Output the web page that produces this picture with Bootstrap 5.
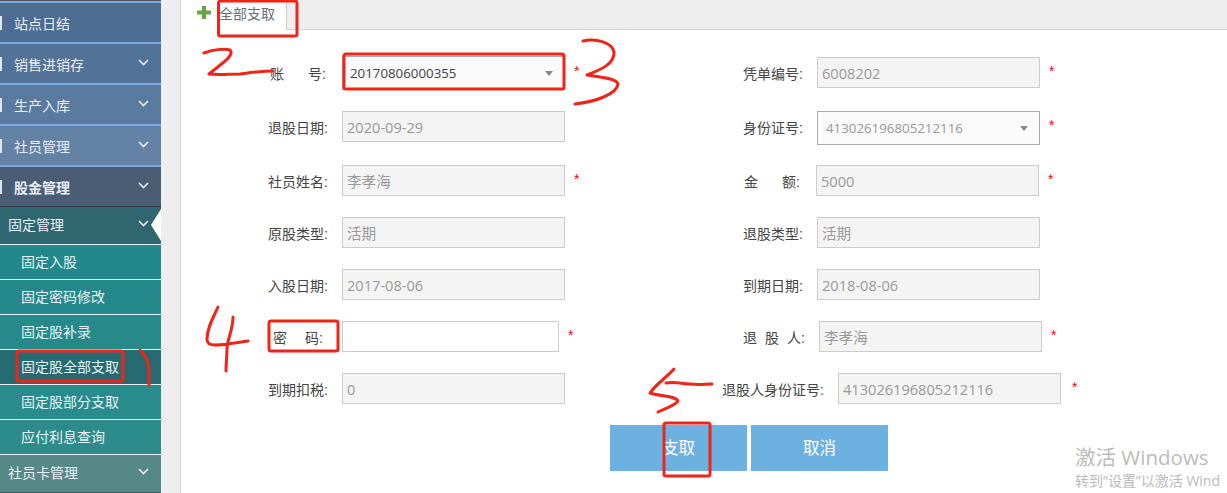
<!DOCTYPE html>
<html lang="zh"><head><meta charset="utf-8">
<link href="https://cdn.jsdelivr.net/npm/bootstrap@5.3.0/dist/css/bootstrap.min.css" rel="stylesheet">
<style>
html,body{height:493px;overflow:hidden;background:#fff;}
body{font-family:"Liberation Sans","Noto Sans CJK SC",sans-serif;font-size:14px;color:#444;position:relative;}
.shell{height:493px;}
.side{width:161px;flex:none;overflow:hidden;background:#556;}
.side-list{list-style:none;margin:0;padding:0;}
.m-item{height:41px;display:flex;align-items:center;justify-content:space-between;padding:3px 12px 0 14px;color:#e9eef3;border-top:2px solid #7ba8de;position:relative;}
.m-item::before{content:"";position:absolute;left:0;top:13px;width:2px;height:14px;background:#dfe6ee;}
.m1{height:41px;margin-top:1px;background:#4c6c94;}
.m2{background:#527297;}.m3{background:#5a7a9f;}.m4{background:#6482a6;}
.m5{background:#4a5d75;font-weight:700;}
.m6{height:38px;background:#2f6670;padding:0 12px 0 8px;border-top:1px solid #3c3c40;}
.m6::before{display:none;}
.m6::after{content:"";position:absolute;right:0;top:2px;border-style:solid;border-width:16px 10px 16px 0;border-color:transparent #fff transparent transparent;}
.s-item{height:35px;display:flex;align-items:center;padding-left:21px;color:#e9f2f2;border-top:1px solid #e8f0f0;background:#23888c;}
.s2{background:#25898c;}.s3{background:#28898b;}.s5{background:#2a8b8c;}.s6{background:#2c8c8c;}
.s4{background:#276a72;}
.m7{height:38px;background:#568888;padding:0 12px 0 8px;border-top:1px solid #e8f0f0;}
.m7::before{display:none;}
.chev{flex:none;margin-top:-5px;}
.gutter{width:20px;flex:none;background:#eee;border-right:1px solid #cfd3d8;}
.pane{flex:1;min-width:0;}
.tabstrip{height:30px;background:#eee;border-bottom:1px solid #cbd5e1;}
.tab1{width:106px;height:30px;background:#fff;border-right:1px solid #ccc;padding:4px 0 0 16px;gap:8px;color:#666e78;}
.plus-mk{margin-top:2px;flex:none;}
.formarea{padding-top:27px;position:relative;}
.frow{height:54px;}.frow.shrt{height:52px;}
.fcell{position:relative;align-items:flex-start;height:33px;}
.cl{width:562px;padding-left:87px;}
.lb{width:74px;flex:none;line-height:35px;color:#444;white-space:nowrap;padding-left:0;}
.ind2{padding-left:2px;}.ind5{padding-left:5px;}
.lb-j{width:73px;padding-left:1px;}
.lb-t{width:76px;}
.lb-x{width:116px;margin-left:-21px;}
.sp{display:inline-block;}
.sp1{width:24px;}.sp2{width:18px;}.sp3{width:8px;}
.fld{width:223px;height:31px;border:1px solid #ccc;background:#f4f4f4;color:#999;line-height:31px;padding-left:4px;flex:none;font-family:"Open Sans","Noto Sans CJK SC",sans-serif;font-size:14.6px;}
.fld.w{background:#fff;width:217px;}
.fld.sel{background:#fafafa;border-color:#aaa;height:34px;line-height:32px;padding:0 10px 0 7px;color:#444;display:flex;justify-content:space-between;align-items:center;font-size:13.3px;}
.sel-up{margin-top:-1px;}
.fld.sel.g{color:#999;padding-left:8px;padding-right:10px;}
.caret-mk{border-style:solid;border-width:5px 4px 0;border-color:#888 transparent transparent;margin-right:1px;}
.star{color:#f00;font-size:14px;margin-left:9px;line-height:29px;}
.star-x{margin-left:11px;}
.btns{gap:4px;margin-left:428px;padding-left:1px;}
.actbtn{width:137px;height:46px;background:#6db1e0;color:#fff;border:0;border-radius:0;font-size:16.5px;padding:0;}
.actbtn:hover{background:#6db1e0;color:#fff;}
.wm{position:absolute;left:1075px;top:447px;color:#bbb;line-height:1;white-space:nowrap;pointer-events:none;}
.wm1{font-size:20.5px;font-family:"Open Sans","Noto Sans CJK SC",sans-serif;}
.wm2{font-size:14px;margin-top:6px;font-family:"Open Sans","Noto Sans CJK SC",sans-serif;}
.ink{position:absolute;left:0;top:0;pointer-events:none;}
.ink *{fill:none;stroke:#f2241a;stroke-width:3;stroke-linecap:round;stroke-linejoin:round;}
</style></head><body>
<div class="d-flex shell">
  <nav class="side">
    <ul class="side-list">
      <li class="m-item m1">站点日结</li>
      <li class="m-item m2">销售进销存<svg class="chev" width="11" height="7" viewBox="0 0 11 7"><path d="M1 1l4.500 4.500L10 1" fill="none" stroke="#e9eef3" stroke-width="1.6"/></svg></li>
      <li class="m-item m3">生产入库<svg class="chev" width="11" height="7" viewBox="0 0 11 7"><path d="M1 1l4.500 4.500L10 1" fill="none" stroke="#e9eef3" stroke-width="1.6"/></svg></li>
      <li class="m-item m4">社员管理<svg class="chev" width="11" height="7" viewBox="0 0 11 7"><path d="M1 1l4.500 4.500L10 1" fill="none" stroke="#e9eef3" stroke-width="1.6"/></svg></li>
      <li class="m-item m5">股金管理<svg class="chev" width="11" height="7" viewBox="0 0 11 7"><path d="M1 1l4.500 4.500L10 1" fill="none" stroke="#e9eef3" stroke-width="1.6"/></svg></li>
      <li class="m-item m6">固定管理<svg class="chev" width="11" height="7" viewBox="0 0 11 7"><path d="M1 1l4.500 4.500L10 1" fill="none" stroke="#e9eef3" stroke-width="1.6"/></svg></li>
      <li class="s-item s1">固定入股</li>
      <li class="s-item s2">固定密码修改</li>
      <li class="s-item s3">固定股补录</li>
      <li class="s-item s4">固定股全部支取</li>
      <li class="s-item s5">固定股部分支取</li>
      <li class="s-item s6">应付利息查询</li>
      <li class="m-item m7">社员卡管理<svg class="chev" width="11" height="7" viewBox="0 0 11 7"><path d="M1 1l4.500 4.500L10 1" fill="none" stroke="#e9eef3" stroke-width="1.6"/></svg></li>
    </ul>
  </nav>
  <div class="gutter"></div>
  <main class="pane">
    <div class="tabstrip"><div class="tab1 d-flex align-items-start">
      <svg class="plus-mk" width="14" height="13" viewBox="0 0 14 13"><path d="M5 0h4v4.500h5v4H9V13H5V8.500H0v-4h5z" fill="#62a744"/></svg><span>全部支取</span>
    </div></div>
    <div class="formarea">
      <div class="frow d-flex"><div class="cl d-flex fcell"><span class="lb ind2">账<span class="sp sp1"></span>号:</span><div class="fld sel sel-up"><span>20170806000355</span><i class="caret-mk"></i></div><span class="star">*</span></div>
        <div class="d-flex fcell"><span class="lb">凭单编号:</span><div class="fld">6008202</div><span class="star">*</span></div></div>
      <div class="frow d-flex"><div class="cl d-flex fcell"><span class="lb">退股日期:</span><div class="fld">2020-09-29</div></div>
        <div class="d-flex fcell"><span class="lb">身份证号:</span><div class="fld sel g"><span>413026196805212116</span><i class="caret-mk"></i></div><span class="star">*</span></div></div>
      <div class="frow shrt d-flex"><div class="cl d-flex fcell"><span class="lb">社员姓名:</span><div class="fld">李孝海</div><span class="star">*</span></div>
        <div class="d-flex fcell"><span class="lb lb-j">金<span class="sp sp1"></span>额:</span><div class="fld">5000</div><span class="star">*</span></div></div>
      <div class="frow shrt d-flex"><div class="cl d-flex fcell"><span class="lb">原股类型:</span><div class="fld">活期</div></div>
        <div class="d-flex fcell"><span class="lb">退股类型:</span><div class="fld">活期</div></div></div>
      <div class="frow shrt d-flex"><div class="cl d-flex fcell"><span class="lb">入股日期:</span><div class="fld">2017-08-06</div></div>
        <div class="d-flex fcell"><span class="lb">到期日期:</span><div class="fld">2018-08-06</div></div></div>
      <div class="frow shrt d-flex"><div class="cl d-flex fcell"><span class="lb ind5">密<span class="sp sp2"></span>码:</span><div class="fld w"></div><span class="star">*</span></div>
        <div class="d-flex fcell"><span class="lb lb-t">退<span class="sp sp3"></span>股<span class="sp sp3"></span>人:</span><div class="fld">李孝海</div><span class="star">*</span></div></div>
      <div class="frow shrt d-flex"><div class="cl d-flex fcell"><span class="lb">到期扣税:</span><div class="fld">0</div></div>
        <div class="d-flex fcell"><span class="lb lb-x">退股人身份证号:</span><div class="fld">413026196805212116</div><span class="star star-x">*</span></div></div>
      <div class="btns d-flex"><button class="btn actbtn">支取</button><button class="btn actbtn">取消</button></div>
    </div>
  </main>
</div>
<div class="wm"><div class="wm1">激活 Windows</div><div class="wm2">转到“设置”以激活 Wind</div></div>
<svg class="ink" width="1227" height="493" viewBox="0 0 1227 493">
  <rect x="218.500" y="1" width="78.500" height="35" rx="2"/>
  <rect x="344" y="54" width="220" height="35" rx="2"/>
  <rect x="269" y="321" width="69" height="30" rx="2"/>
  <rect x="17" y="351" width="106" height="30" rx="2"/>
  <rect x="664" y="423" width="46" height="53" rx="2"/>
  <path d="M204 53c8-3 20-5 26-3 3 3-1 8-6 12-5 4-10 8-15 12 10 1 20 0 31 0 8-1 20-3 33-3"/>
  <path d="M583 41C595 38 612 42 614 52 615 64 600 70 587 75 598 77 617 78 618 84 617 94 595 102 575 104"/>
  <path d="M218 307c-5 11-11 21-11 32 0 5 3 6 8 6 12 0 24-3 33-4M233 317c0 14-6 22-6 32 0 7-1 14-1 22"/>
  <path d="M140 350c5 5 9 12 9 20l0 15"/>
  <path d="M674 369c-8 9-18 15-24 24 8 3 26 3 28 8-3 5-13 7-20 11M666 383c10-2 16 1 24 1 8 1 15 0 22 0"/>
</svg>
</body></html>
